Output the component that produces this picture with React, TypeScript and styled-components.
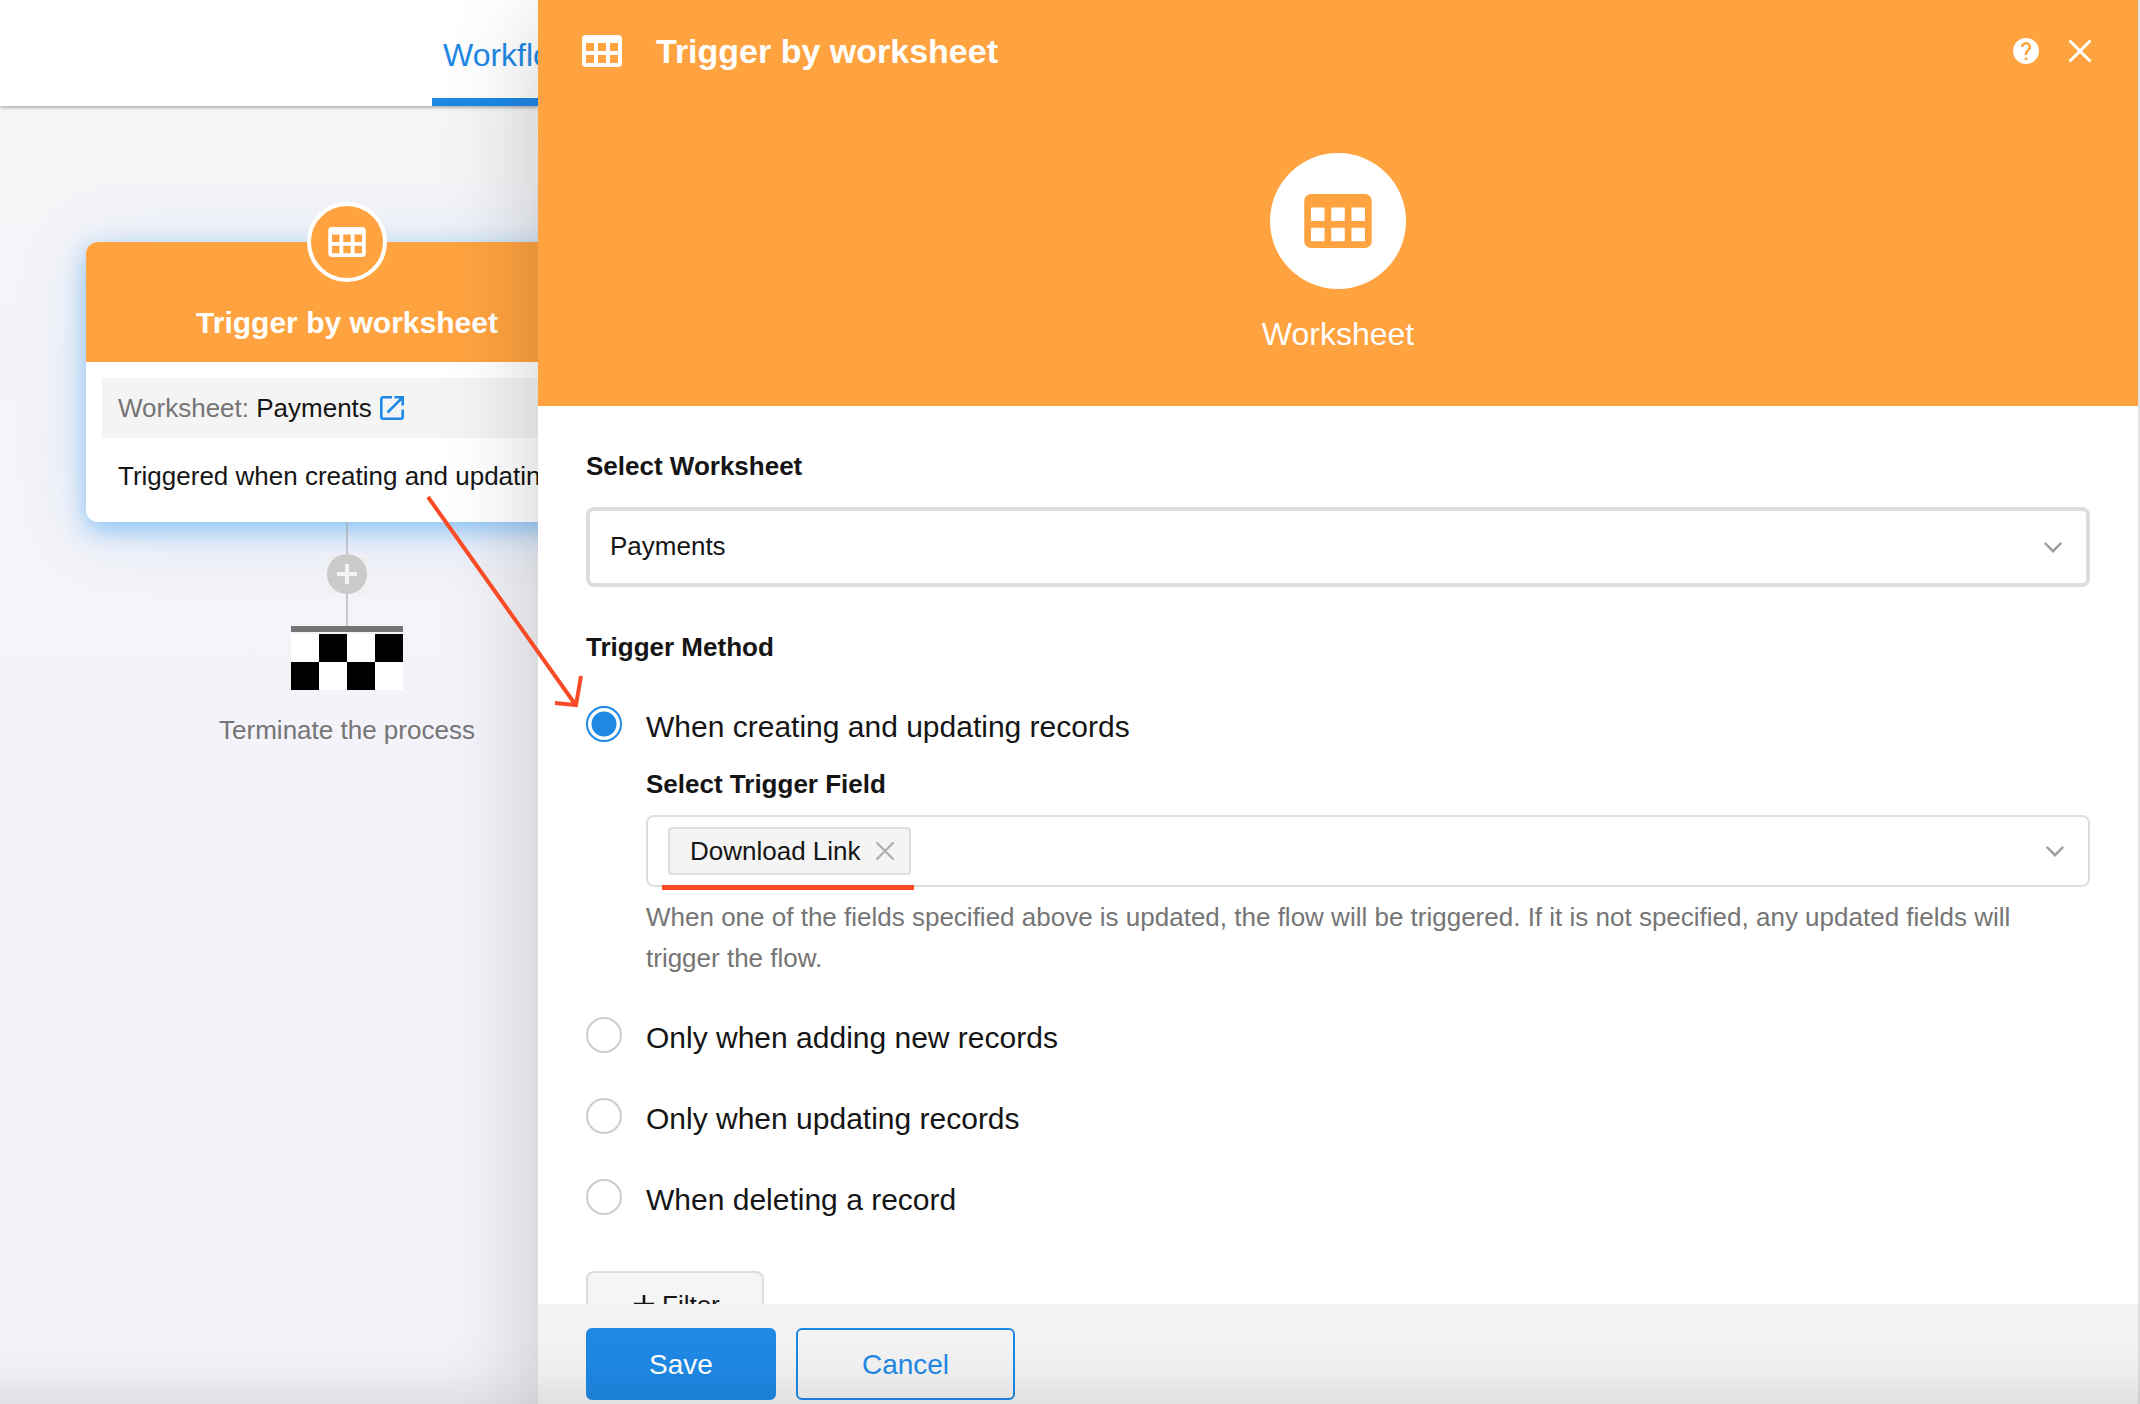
import React, { useState } from "react";
import styled, { createGlobalStyle, css } from "styled-components";

const orange = "#ffa340";
const blue = "#1e88e5";
const ink = "#151515";
const grey = "#757575";
const line = "#dddddd";
const red = "#f94b26";

const GlobalStyle = createGlobalStyle`
  *, *::before, *::after { box-sizing: border-box; }
  body {
    margin: 0;
    color: ${ink};
    font-family: "Liberation Sans", Arial, sans-serif;
    font-size: 26px;
    line-height: 40px;
  }
  button, input, select { font: inherit; color: inherit; }
  h1, h2, h3, p { margin: 0; }
  svg { display: block; flex: none; }
`;

const Page = styled.div`
  position: relative;
  display: grid;
  grid-template-columns: 538px minmax(0, 1fr);
  height: 100vh;
  overflow: hidden;
`;

/* ---------- workflow canvas ---------- */

const Workspace = styled.main`
  display: flex;
  flex-direction: column;
  min-width: 0;
  overflow: hidden;
  background: linear-gradient(#f5f5f7, #f3f3f9 50%);
`;

const TopBar = styled.nav`
  display: flex;
  flex: none;
  height: 106px;
  padding-left: 432px;
  background: #fff;
  box-shadow: 0 1px 4px rgba(0, 0, 0, 0.4);
`;

const Tab = styled.a`
  flex: none;
  padding: 35px 11px 0;
  border-bottom: 8px solid ${blue};
  color: ${blue};
  font-size: 32px;
  text-decoration: none;
`;

const Flow = styled.div`
  display: flex;
  flex-direction: column;
  align-items: center;
  width: 522px;
  margin: 96px 0 0 86px;
`;

const NodeBadge = styled.div`
  z-index: 1;
  display: grid;
  place-items: center;
  width: 80px;
  height: 80px;
  margin-bottom: -40px;
  border: 4px solid #fff;
  border-radius: 50%;
  background: ${orange};
  color: #fff;
`;

const NodeCard = styled.article`
  align-self: stretch;
  border-radius: 12px;
  background: #fff;
  box-shadow: 0 8px 24px rgba(33, 150, 243, 0.46), 0 6px 72px rgba(33, 130, 243, 0.14);
`;

const NodeTitle = styled.h2`
  padding: 61px 16px 19px;
  border-radius: 12px 12px 0 0;
  background: ${orange};
  color: #fff;
  font-size: 30px;
  line-height: 40px;
  text-align: center;
`;

const NodeBody = styled.div`
  padding: 16px 16px 24px;
`;

const NodeSource = styled.p`
  display: flex;
  align-items: center;
  gap: 8px;
  height: 60px;
  padding: 0 16px;
  background: #f4f4f4;
  white-space: nowrap;
`;

const Muted = styled.span`
  color: ${grey};
`;

const SourceLink = styled.a`
  color: ${blue};
`;

const NodeText = styled.p`
  padding: 18px 16px 2px;
  white-space: nowrap;
`;

const Connector = styled.div`
  width: 2px;
  height: 32px;
  background: rgba(170, 170, 170, 0.6);
`;

const AddStep = styled.button`
  width: 40px;
  height: 40px;
  padding: 0;
  border: 0;
  background: #f0f0f0;
`;

const Finish = styled.div`
  display: flex;
  flex-direction: column;
  width: 112px;
  border-top: 6px solid ${grey};
  padding-top: 2px;
`;

const Checkers = styled.div`
  height: 56px;
  background: conic-gradient(#fff 25%, #000 0 50%, #fff 0 75%, #000 0) 28px 0 / 56px 56px;
`;

const FinishLabel = styled.p`
  margin-top: 20px;
  color: ${grey};
`;

/* ---------- settings drawer ---------- */

const Drawer = styled.aside`
  z-index: 1;
  display: flex;
  flex-direction: column;
  min-height: 0;
  border-right: 2px solid #e0e0e0;
  background: #fff;
  box-shadow: 0 24px 90px rgba(0, 0, 0, 0.2);
`;

const Banner = styled.header`
  flex: none;
  height: 406px;
  background: ${orange};
  color: #fff;
`;

const BannerBar = styled.div`
  display: flex;
  align-items: center;
  height: 102px;
  padding: 0 45px 0 44px;
`;

const BannerTitle = styled.h1`
  flex: 1;
  margin-left: 34px;
  font-size: 34px;
  line-height: 40px;
`;

const IconButton = styled.button`
  display: grid;
  place-items: center;
  padding: 0;
  border: 0;
  background: none;
`;

const BannerActions = styled.div`
  display: flex;
  gap: 28px;

  ${IconButton} { width: 26px; height: 26px; color: #fff; }
`;

const BannerHero = styled.div`
  display: flex;
  flex-direction: column;
  align-items: center;
  gap: 25px;
  padding-top: 51px;
  font-size: 32px;
`;

const HeroCircle = styled.div`
  display: grid;
  place-items: center;
  width: 136px;
  height: 136px;
  border-radius: 50%;
  background: #fff;
  color: ${orange};
`;

const Form = styled.form`
  display: flex;
  flex: 1;
  flex-direction: column;
  min-height: 0;
`;

const Fields = styled.div`
  flex: 1;
  min-height: 0;
  padding: 40px 48px 0;
  overflow: hidden;
`;

const labelText = css`
  display: block;
  padding: 0;
  font-size: 26px;
  font-weight: bold;
`;

const FieldLabel = styled.label`
  ${labelText}
`;

const SelectBox = styled.div`
  display: grid;
  align-items: center;
  margin-top: 21px;

  > * { grid-area: 1 / 1; }
  > svg { justify-self: end; margin-right: 28px; pointer-events: none; }
`;

const Select = styled.select`
  width: 100%;
  height: 80px;
  padding: 0 20px 2px;
  border: 4px solid ${line};
  border-radius: 8px;
  background: #fff;
  appearance: none;
`;

const Methods = styled.fieldset`
  min-width: 0;
  margin: 40px 0 0;
  padding: 0;
  border: 0;
`;

const Legend = styled.legend`
  ${labelText}
  margin-bottom: 39px;
`;

const Option = styled.div<{ $spaced?: boolean }>`
  display: flex;
  gap: 24px;
  height: 36px;
  margin-top: ${(p) => (p.$spaced ? "45px" : "0")};
`;

const Radio = styled.input`
  flex: none;
  width: 36px;
  height: 36px;
  margin: 0;
  border: 2px solid #cccccc;
  border-radius: 50%;
  appearance: none;

  &:checked {
    border-color: ${blue};
    background: radial-gradient(circle, ${blue} 12px, transparent 13px);
  }
`;

const OptionLabel = styled.label`
  font-size: 30px;
  line-height: 42px;
`;

const Nested = styled.div`
  margin: 22px 0 38px 60px;
`;

const TagBox = styled.div`
  position: relative;
  display: flex;
  align-items: center;
  justify-content: space-between;
  height: 72px;
  margin-top: 11px;
  padding: 0 24px 0 20px;
  border: 2px solid ${line};
  border-radius: 8px;
`;

const Tag = styled.span`
  display: flex;
  align-items: center;
  gap: 14px;
  height: 48px;
  padding: 0 14px 0 20px;
  border: 2px solid ${line};
  border-radius: 4px;
  background: #f4f4f4;

  ${IconButton} { width: 20px; height: 20px; color: #aaaaaa; }
`;

const Underline = styled.span`
  position: absolute;
  left: 14px;
  bottom: -5px;
  width: 252px;
  height: 5px;
  background: ${red};
`;

const Hint = styled.p`
  margin-top: 10px;
  color: ${grey};
  line-height: 41px;
`;

const FilterButton = styled.button`
  display: flex;
  align-items: center;
  gap: 8px;
  height: 68px;
  margin-top: 56px;
  padding: 0 42px 0 46px;
  border: 2px solid ${line};
  border-radius: 8px;
  background: #f5f5f5;
`;

const Footer = styled.footer`
  display: flex;
  flex: none;
  gap: 20px;
  height: 100px;
  padding: 24px 48px 4px;
  background: #f3f3f3;
`;

const Action = styled.button<{ $primary?: boolean }>`
  width: ${(p) => (p.$primary ? "190px" : "219px")};
  padding: 2px 0 0;
  border: 2px solid ${blue};
  border-radius: 6px;
  background: ${(p) => (p.$primary ? blue : "transparent")};
  color: ${(p) => (p.$primary ? "#fff" : blue)};
  font-size: 28px;
`;

const BottomShade = styled.div`
  position: absolute;
  z-index: 2;
  right: 0;
  bottom: 0;
  left: 0;
  height: 70px;
  background: linear-gradient(transparent, rgba(0, 0, 0, 0.02) 50%, rgba(0, 0, 0, 0.08));
  pointer-events: none;
`;

const Arrow = styled.svg`
  position: absolute;
  z-index: 2;
  top: 490px;
  left: 420px;
  pointer-events: none;
`;

/* ---------- icons ---------- */

const SheetIcon = ({ width }: { width: number }) => (
  <svg width={width} height={Math.round(width * 0.8)} viewBox="0 0 20 16" fill="currentColor" aria-hidden="true">
    <path
      fillRule="evenodd"
      d="M2 0h16a2 2 0 0 1 2 2v12a2 2 0 0 1-2 2H2a2 2 0 0 1-2-2V2a2 2 0 0 1 2-2ZM2 4v4h4V4ZM8 4v4h4V4ZM14 4v4h4V4ZM2 10v4h4v-4ZM8 10v4h4v-4ZM14 10v4h4v-4Z"
    />
  </svg>
);

const CrossIcon = ({ size, stroke }: { size: number; stroke: number }) => (
  <svg width={size} height={size} viewBox={`0 0 ${size} ${size}`} fill="none" stroke="currentColor" strokeWidth={stroke} strokeLinecap="round" aria-hidden="true">
    <path d={`M${stroke / 2} ${stroke / 2}L${size - stroke / 2} ${size - stroke / 2}M${size - stroke / 2} ${stroke / 2}L${stroke / 2} ${size - stroke / 2}`} />
  </svg>
);

const HelpIcon = () => (
  <svg width="26" height="26" viewBox="2 2 20 20" fill="currentColor" aria-hidden="true">
    <path d="M12 2C6.48 2 2 6.48 2 12s4.48 10 10 10 10-4.48 10-10S17.52 2 12 2zm1 17h-2v-2h2v2zm2.07-7.75l-.9.92C13.45 12.9 13 13.5 13 15h-2v-.5c0-1.1.45-2.1 1.17-2.83l1.24-1.26c.37-.36.59-.86.59-1.41 0-1.1-.9-2-2-2s-2 .9-2 2H8c0-2.21 1.79-4 4-4s4 1.79 4 4c0 .88-.36 1.68-.93 2.25z" />
  </svg>
);

const OpenIcon = () => (
  <svg width="24" height="24" viewBox="0 0 24 24" fill="none" stroke="currentColor" strokeWidth="2.6" aria-hidden="true">
    <path d="M12 1.3H3.3a2 2 0 0 0-2 2v17.4a2 2 0 0 0 2 2h17.4a2 2 0 0 0 2-2V13.5" />
    <path d="M14.5 1.3h8.2v8.2M22.3 1.7 7.5 16.5" />
  </svg>
);

const ChevronIcon = () => (
  <svg width="18" height="11" viewBox="0 0 18 11" fill="none" stroke="#9e9e9e" strokeWidth="2.4" strokeLinecap="round" aria-hidden="true">
    <path d="M1.4 1.5 9 9.2l7.6-7.7" />
  </svg>
);

const AddIcon = () => (
  <svg width="40" height="40" viewBox="0 0 40 40" aria-hidden="true">
    <circle cx="20" cy="20" r="20" fill="#cacaca" />
    <path d="M10 20h20M20 10v20" stroke="#f4f4f6" strokeWidth="4" />
  </svg>
);

const PlusIcon = () => (
  <svg width="20" height="20" viewBox="0 0 20 20" stroke="currentColor" strokeWidth="2.6" aria-hidden="true">
    <path d="M0 9h20M10 0v19" />
  </svg>
);

const methods = [
  { id: "create-update", label: "When creating and updating records" },
  { id: "create", label: "Only when adding new records" },
  { id: "update", label: "Only when updating records" },
  { id: "delete", label: "When deleting a record" },
];

export default function App() {
  const [method, setMethod] = useState("create-update");

  return (
    <Page>
      <GlobalStyle />
      <Workspace>
        <TopBar>
          <Tab href="#workflow">Workflow</Tab>
        </TopBar>
        <Flow>
          <NodeBadge>
            <SheetIcon width={38} />
          </NodeBadge>
          <NodeCard>
            <NodeTitle>Trigger by worksheet</NodeTitle>
            <NodeBody>
              <NodeSource>
                <span>
                  <Muted>Worksheet:</Muted> Payments
                </span>
                <SourceLink href="#payments" aria-label="Open worksheet">
                  <OpenIcon />
                </SourceLink>
              </NodeSource>
              <NodeText>Triggered when creating and updating</NodeText>
            </NodeBody>
          </NodeCard>
          <Connector />
          <AddStep type="button" aria-label="Add step">
            <AddIcon />
          </AddStep>
          <Connector />
          <Finish>
            <Checkers />
          </Finish>
          <FinishLabel>Terminate the process</FinishLabel>
        </Flow>
      </Workspace>

      <Drawer>
        <Banner>
          <BannerBar>
            <SheetIcon width={40} />
            <BannerTitle>Trigger by worksheet</BannerTitle>
            <BannerActions>
              <IconButton type="button" aria-label="Help">
                <HelpIcon />
              </IconButton>
              <IconButton type="button" aria-label="Close">
                <CrossIcon size={22} stroke={3} />
              </IconButton>
            </BannerActions>
          </BannerBar>
          <BannerHero>
            <HeroCircle>
              <SheetIcon width={68} />
            </HeroCircle>
            <span>Worksheet</span>
          </BannerHero>
        </Banner>

        <Form onSubmit={(e) => e.preventDefault()}>
          <Fields>
            <FieldLabel htmlFor="worksheet">Select Worksheet</FieldLabel>
            <SelectBox>
              <Select id="worksheet">
                <option>Payments</option>
              </Select>
              <ChevronIcon />
            </SelectBox>

            <Methods>
              <Legend>Trigger Method</Legend>
              {methods.map(({ id, label }, i) => (
                <React.Fragment key={id}>
                  <Option $spaced={i > 1}>
                    <Radio
                      type="radio"
                      name="method"
                      id={id}
                      checked={method === id}
                      onChange={() => setMethod(id)}
                    />
                    <OptionLabel htmlFor={id}>{label}</OptionLabel>
                  </Option>
                  {i === 0 && (
                    <Nested>
                      <FieldLabel as="h3">Select Trigger Field</FieldLabel>
                      <TagBox>
                        <Tag>
                          Download Link
                          <IconButton type="button" aria-label="Remove Download Link">
                            <CrossIcon size={18} stroke={2} />
                          </IconButton>
                        </Tag>
                        <ChevronIcon />
                        <Underline />
                      </TagBox>
                      <Hint>
                        When one of the fields specified above is updated, the flow will be triggered. If it is not
                        specified, any updated fields will trigger the flow.
                      </Hint>
                    </Nested>
                  )}
                </React.Fragment>
              ))}
            </Methods>

            <FilterButton type="button">
              <PlusIcon />
              Filter
            </FilterButton>
          </Fields>
          <Footer>
            <Action type="submit" $primary>
              Save
            </Action>
            <Action type="button">Cancel</Action>
          </Footer>
        </Form>
      </Drawer>

      <Arrow width="170" height="225" viewBox="0 0 170 225" fill="none" stroke={red} strokeWidth="4" aria-hidden="true">
        <path d="M8 7 155 214M135 213l21 2 5-29" />
      </Arrow>
      <BottomShade />
    </Page>
  );
}
